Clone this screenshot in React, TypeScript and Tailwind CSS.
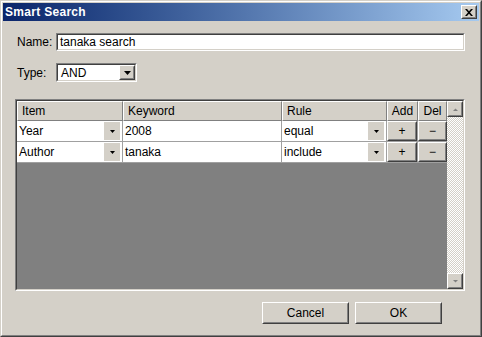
import React from 'react';

const raised =
  'border border-t-white border-l-white border-r-[#404040] border-b-[#404040]';
const raisedInner = 'border border-t-[#d4d0c8] border-l-[#d4d0c8] border-r-[#808080] border-b-[#808080]';

const DownArrow = ({ color = '#000' }: { color?: string }) => (
  <svg width="7" height="4" viewBox="0 0 7 4">
    <path d="M0 0h7L3.5 4z" fill={color} />
  </svg>
);

const SmallArrow = () => (
  <svg width="5" height="3" viewBox="0 0 5 3">
    <path d="M0 0h5L2.5 3z" fill="#000" />
  </svg>
);

const RaisedBox: React.FC<{ className?: string; children?: React.ReactNode }> = ({ className = '', children }) => (
  <div className={`${raised} ${className}`}>
    <div className={`${raisedInner} w-full h-full flex items-center justify-center bg-[#d4d0c8]`}>{children}</div>
  </div>
);

const Sunken: React.FC<{ className?: string; children?: React.ReactNode }> = ({ className = '', children }) => (
  <div className={`border border-t-[#808080] border-l-[#808080] border-r-white border-b-white ${className}`}>
    <div className="border border-t-[#404040] border-l-[#404040] border-r-[#d4d0c8] border-b-[#d4d0c8] w-full h-full">
      {children}
    </div>
  </div>
);

const HeaderCell: React.FC<{ w: string; label: string; center?: boolean }> = ({ w, label, center }) => (
  <div className={`${w} h-full border-r border-b border-r-[#808080] border-b-[#808080] border-l border-l-white border-t border-t-white flex items-center ${center ? 'justify-center' : 'pl-[4px]'}`}>
    {label}
  </div>
);

const rows = [
  { item: 'Year', keyword: '2008', rule: 'equal' },
  { item: 'Author', keyword: 'tanaka', rule: 'include' },
];

export default function App() {
  return (
    <div
      className="w-[482px] h-[337px] bg-[#d4d0c8] text-[12px] text-black border border-t-[#d4d0c8] border-l-[#d4d0c8] border-r-[#404040] border-b-[#404040]"
      style={{ fontFamily: '"Liberation Sans", Arial, sans-serif' }}
    >
      <div className="w-full h-full border border-t-white border-l-white border-r-[#808080] border-b-[#808080] p-px flex flex-col">
        {/* Title bar */}
        <div className="h-[18px] shrink-0 flex items-center justify-between bg-gradient-to-r from-[#0a246a] to-[#a6caf0] pl-[2px] pr-[2px]">
          <span className="text-white font-bold text-[12px] tracking-[0.3px]">Smart Search</span>
          <RaisedBox className="w-[16px] h-[14px]">
            <svg width="8" height="7" viewBox="0 0 8 7">
              <path d="M0 0h2l2 2.3L6 0h2L5 3.5 8 7H6L4 4.7 2 7H0l3-3.5z" fill="#000" />
            </svg>
          </RaisedBox>
        </div>

        {/* Name */}
        <div className="flex items-center mt-[12px] pl-[14px] h-[18px]">
          <span className="w-[39px]">Name:</span>
          <Sunken className="w-[409px] h-[18px] bg-white">
            <div className="bg-white h-full flex items-center pl-[2px]">tanaka search</div>
          </Sunken>
        </div>

        {/* Type */}
        <div className="flex items-center mt-[12px] pl-[14px] h-[19px]">
          <span className="w-[39px]">Type:</span>
          <Sunken className="w-[81px] h-[19px]">
            <div className="bg-white h-full flex items-center justify-between pl-[3px]">
              <span>AND</span>
              <RaisedBox className="w-[16px] h-[15px]">
                <DownArrow />
              </RaisedBox>
            </div>
          </Sunken>
        </div>

        {/* Grid */}
        <div className="mt-[17px] ml-[12px] w-[450px] h-[192px]">
          <Sunken className="w-full h-full">
            <div className="flex h-full">
              <div className="flex-1 flex flex-col bg-[#808080]">
                <div className="flex h-[20px] bg-[#d4d0c8]">
                  <HeaderCell w="w-[106px]" label="Item" />
                  <HeaderCell w="w-[159px]" label="Keyword" />
                  <HeaderCell w="w-[105px]" label="Rule" />
                  <HeaderCell w="w-[31px]" label="Add" center />
                  <HeaderCell w="w-[29px]" label="Del" center />
                </div>
                {rows.map((r) => (
                  <div key={r.item} className="flex h-[21px] bg-white border-b border-b-[#a0a0a0]">
                    <div className="w-[106px] h-full flex items-center justify-between pl-[2px] pr-[2px] border-r border-r-[#a0a0a0]">
                      <span>{r.item}</span>
                      <div className="w-[16px] h-[18px] bg-[#d4d0c8] flex items-center justify-center">
                        <SmallArrow />
                      </div>
                    </div>
                    <div className="w-[159px] h-full flex items-center pl-[2px] border-r border-r-[#a0a0a0]">
                      {r.keyword}
                    </div>
                    <div className="w-[105px] h-full flex items-center justify-between pl-[2px] pr-[2px] border-r border-r-[#a0a0a0]">
                      <span>{r.rule}</span>
                      <div className="w-[16px] h-[18px] bg-[#d4d0c8] flex items-center justify-center">
                        <SmallArrow />
                      </div>
                    </div>
                    <div className="w-[31px] h-full border-r border-r-[#a0a0a0]">
                      <RaisedBox className="w-full h-full">+</RaisedBox>
                    </div>
                    <div className="w-[29px] h-full">
                      <RaisedBox className="w-full h-full">−</RaisedBox>
                    </div>
                  </div>
                ))}
              </div>
              {/* Scrollbar */}
              <div className="w-[16px] h-full flex flex-col bg-[repeating-conic-gradient(#d4d0c8_0_25%,#ffffff_0_50%)] bg-[length:2px_2px]">
                <RaisedBox className="w-[16px] h-[16px] shrink-0">
                  <svg width="7" height="5" viewBox="0 0 7 5">
                    <path d="M1 4h5L3.5 1.5z" fill="#808080" />
                    <path d="M2 5h5L4.5 2.5z" fill="#ffffff" opacity="0" />
                  </svg>
                </RaisedBox>
                <div className="flex-1" />
                <RaisedBox className="w-[16px] h-[16px] shrink-0">
                  <svg width="7" height="5" viewBox="0 0 7 5">
                    <path d="M1 1h5L3.5 3.5z" fill="#808080" />
                  </svg>
                </RaisedBox>
              </div>
            </div>
          </Sunken>
        </div>

        {/* Buttons */}
        <div className="flex justify-end gap-[6px] mt-[11px] pr-[37px]">
          <RaisedBox className="w-[87px] h-[22px]">Cancel</RaisedBox>
          <RaisedBox className="w-[87px] h-[22px]">OK</RaisedBox>
        </div>
      </div>
    </div>
  );
}
